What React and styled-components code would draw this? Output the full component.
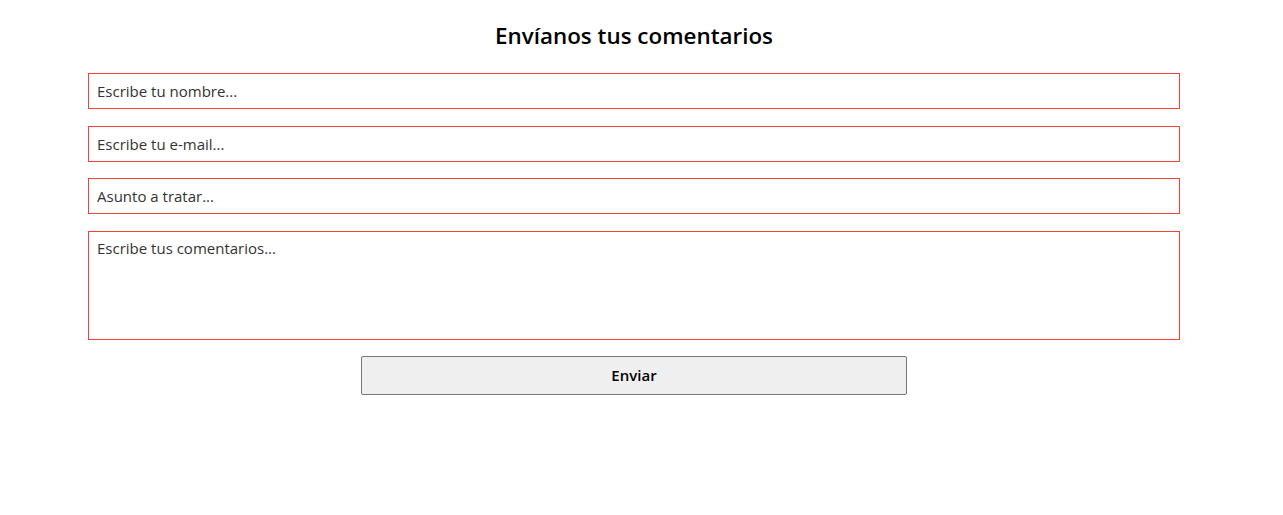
import styled, { createGlobalStyle } from "styled-components";

const GlobalStyle = createGlobalStyle`
  body {
    margin: 0;
    background: #fff;
    font-family: "Segoe UI", "Open Sans", sans-serif;
  }
`;

const Page = styled.div`
  width: 1268px;
  display: flex;
  flex-direction: column;
  align-items: center;
`;

const Title = styled.h2`
  margin: 19px 0 21px;
  font-size: 22.4px;
  line-height: 33px;
  font-weight: 600;
  color: #000;
`;

const Form = styled.form`
  width: 1092px;
  display: flex;
  flex-direction: column;
  align-items: center;
  gap: 16.5px;
`;

const Field = styled.input`
  box-sizing: border-box;
  width: 100%;
  height: 36px;
  margin: 0;
  padding: 0 8px;
  border: 1px solid #f44336;
  border-radius: 0;
  font-family: inherit;
  font-size: 15px;
  color: #333;
  outline: none;

  &::placeholder {
    color: #333;
    opacity: 1;
  }
`;

const Comments = styled.textarea`
  box-sizing: border-box;
  width: 100%;
  height: 109px;
  margin: 0;
  padding: 6px 8px;
  border: 1px solid #f44336;
  border-radius: 0;
  font-family: inherit;
  font-size: 15px;
  line-height: 20px;
  color: #333;
  resize: none;
  outline: none;

  &::placeholder {
    color: #333;
    opacity: 1;
  }
`;

const SendButton = styled.button`
  box-sizing: border-box;
  width: 546px;
  height: 38.5px;
  border: 1px solid #767676;
  border-radius: 2px;
  background: #efefef;
  font-family: inherit;
  font-size: 15px;
  font-weight: 600;
  color: #000;
  cursor: pointer;
`;

export default function App() {
  return (
    <>
      <GlobalStyle />
      <Page>
        <Title>Envíanos tus comentarios</Title>
        <Form onSubmit={(e) => e.preventDefault()}>
          <Field type="text" placeholder="Escribe tu nombre..." />
          <Field type="email" placeholder="Escribe tu e-mail..." />
          <Field type="text" placeholder="Asunto a tratar..." />
          <Comments placeholder="Escribe tus comentarios..." />
          <SendButton type="submit">Enviar</SendButton>
        </Form>
      </Page>
    </>
  );
}
